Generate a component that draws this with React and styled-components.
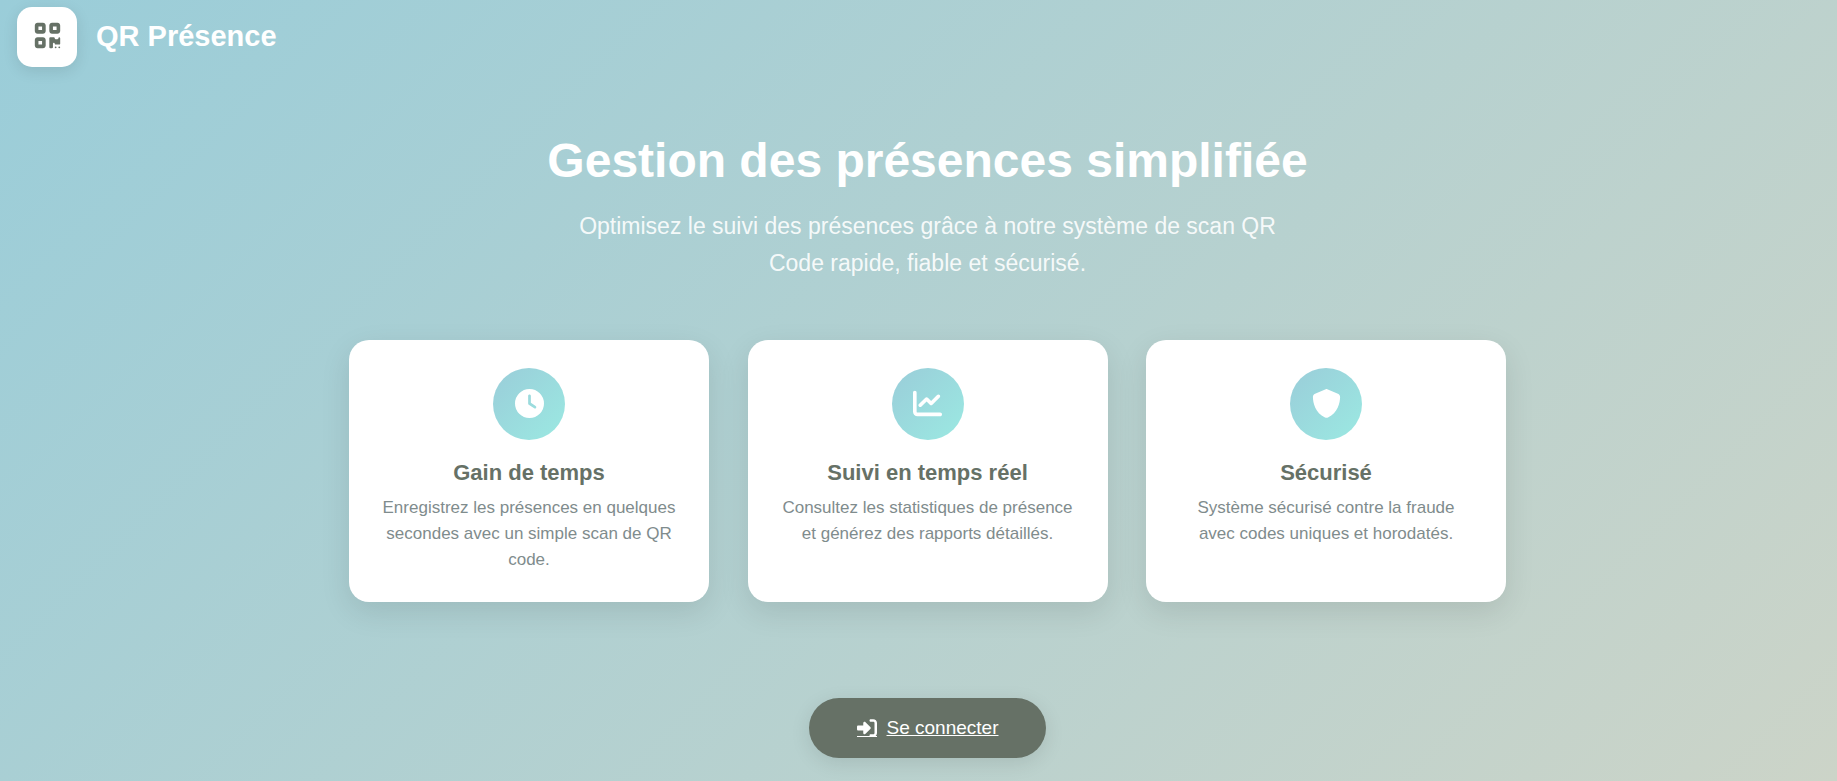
import React from 'react';
import styled, { createGlobalStyle } from 'styled-components';
import { FaQrcode, FaClock, FaChartLine, FaShield, FaRightToBracket } from 'react-icons/fa6';

const GlobalStyle = createGlobalStyle`
  *, *::before, *::after { box-sizing: border-box; }
  body {
    margin: 0;
    font-family: 'Liberation Sans', Arial, sans-serif;
    color: #ffffff;
  }
`;

const Page = styled.div`
  min-height: 100vh;
  padding-bottom: 20px;
  background: linear-gradient(135deg, #9acdd9 0%, #ccd4c8 100%);
`;

const Header = styled.header`
  display: flex;
  align-items: center;
  gap: 19px;
  padding: 7px 17px 0;
`;

const Logo = styled.div`
  display: flex;
  align-items: center;
  justify-content: center;
  width: 60px;
  height: 60px;
  padding-bottom: 4px;
  border-radius: 15px;
  background: #ffffff;
  color: #667166;
  font-size: 29px;
  box-shadow: 0 4px 15px rgba(0, 0, 0, 0.1);
`;

const Brand = styled.span`
  font-size: 29px;
  font-weight: 700;
  line-height: 34px;
  padding-bottom: 2px;
`;

const Main = styled.main`
  display: flex;
  flex-direction: column;
  align-items: center;
  padding: 65px 0 0 18px;
  text-align: center;
`;

const Title = styled.h1`
  margin: 0 0 18px;
  font-size: 48px;
  line-height: 58px;
`;

const Lead = styled.p`
  max-width: 720px;
  margin: 0 0 58px;
  font-size: 23px;
  line-height: 37px;
  color: rgba(255, 255, 255, 0.9);
`;

const Features = styled.section`
  display: flex;
  flex-wrap: wrap;
  justify-content: space-between;
  width: 100%;
  max-width: 1157px;
  margin-bottom: 96px;
`;

const Card = styled.article`
  display: flex;
  flex-direction: column;
  align-items: center;
  flex: 0 1 360px;
  padding: 28px 32px 29px;
  border-radius: 20px;
  background: #ffffff;
  box-shadow: 0 10px 30px rgba(0, 0, 0, 0.1);
`;

const CardIcon = styled.div`
  display: flex;
  align-items: center;
  justify-content: center;
  width: 72px;
  height: 72px;
  margin-bottom: 20px;
  padding-bottom: 2px;
  border-radius: 50%;
  background: linear-gradient(135deg, #9acdd9 0%, #9be9e2 100%);
  font-size: 29px;
`;

const CardTitle = styled.h2`
  margin: 0 0 9px;
  color: #667166;
  font-size: 22px;
  line-height: 26px;
`;

const CardText = styled.p`
  margin: 0;
  color: #7f8c8d;
  font-size: 17px;
  line-height: 26px;
`;

const LoginLink = styled.a`
  display: inline-flex;
  align-items: center;
  gap: 10px;
  height: 60px;
  padding: 0 48px;
  border-radius: 30px;
  background: #667166;
  color: #ffffff;
  font-size: 19px;
  box-shadow: 0 5px 20px rgba(0, 0, 0, 0.1);
`;

const LinkIcon = styled.span`
  display: inline-flex;
  align-items: center;
  height: 18px;
  border-bottom: 1px solid currentColor;
  font-size: 20px;
`;

const features = [
  {
    Icon: FaClock,
    title: 'Gain de temps',
    text: 'Enregistrez les présences en quelques secondes avec un simple scan de QR code.',
  },
  {
    Icon: FaChartLine,
    title: 'Suivi en temps réel',
    text: 'Consultez les statistiques de présence et générez des rapports détaillés.',
  },
  {
    Icon: FaShield,
    title: 'Sécurisé',
    text: 'Système sécurisé contre la fraude avec codes uniques et horodatés.',
  },
];

export default function App() {
  return (
    <Page>
      <GlobalStyle />
      <Header>
        <Logo><FaQrcode aria-hidden="true" /></Logo>
        <Brand>QR Présence</Brand>
      </Header>
      <Main>
        <Title>Gestion des présences simplifiée</Title>
        <Lead>
          Optimisez le suivi des présences grâce à notre système de scan QR Code rapide, fiable et
          sécurisé.
        </Lead>
        <Features>
          {features.map(({ Icon, title, text }) => (
            <Card key={title}>
              <CardIcon><Icon aria-hidden="true" /></CardIcon>
              <CardTitle>{title}</CardTitle>
              <CardText>{text}</CardText>
            </Card>
          ))}
        </Features>
        <LoginLink href="#connexion">
          <LinkIcon><FaRightToBracket aria-hidden="true" /></LinkIcon>
          Se connecter
        </LoginLink>
      </Main>
    </Page>
  );
}
